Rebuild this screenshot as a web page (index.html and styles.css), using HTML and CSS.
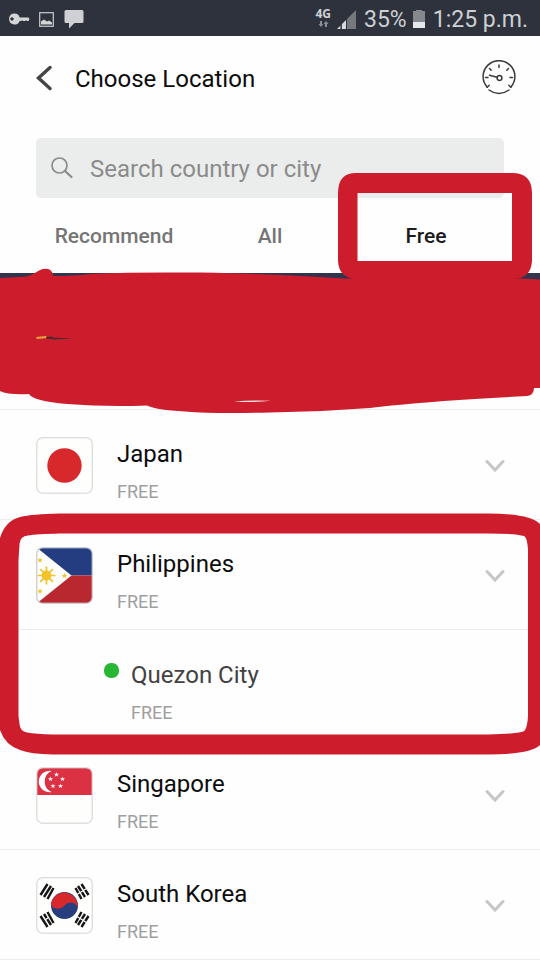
FILE: index.html
```html
<!DOCTYPE html>
<html lang="en">
<head>
<meta charset="utf-8">
<meta name="viewport" content="width=device-width, initial-scale=1">
<title>Choose Location</title>
<link rel="stylesheet" href="styles.css">
</head>
<body>
<div class="page">
  <div class="status">
    <div class="status-group">
      <svg width="22" height="14" viewBox="0 0 22 14"><path fill="#d3d5d7" fill-rule="evenodd" d="M6.500 1.500a5.500 5.500 0 0 1 5.200 4H20.500l1 1.500-1 2H19l-1-.8-1 .8h-2l-1-.8-1 .8h-1.300A5.500 5.500 0 1 1 6.500 1.500zM4 5.200a1.700 1.700 0 1 0 .01 0z"/></svg>
      <svg class="status-picture" width="15" height="15" viewBox="0 0 15 15"><rect x=".7" y=".7" width="13.600" height="13.600" fill="none" stroke="#c9cbce" stroke-width="1.200"/><path fill="#d3d5d7" d="M2 12.500V9.500l3-2 3 2 2-1 3 2v2z"/></svg>
      <svg width="20" height="20" viewBox="0 0 20 20"><path fill="#cfd0d3" d="M2 1h16q1.500 0 1.500 1.500v10q0 1.500-1.500 1.500h-7.500L5 19.500V14H2q-1.500 0-1.500-1.500v-10Q.500 1 2 1z"/></svg>
    </div>
    <div class="status-group">
      <span class="network">
        <span class="network-name">4G</span>
        <svg width="11" height="6" viewBox="0 0 11 6"><path fill="#8b8e93" d="M2 0h2v3h1.500L3 6 .500 3H2zM7 6h2V3h1.500L8 0 5.500 3H7z"/></svg>
      </span>
      <svg class="signal" width="19" height="19" viewBox="0 0 19 19"><path fill="#75787d" d="M10 9l9-9v19h-9z"/><path fill="#d8dadd" d="M0 19l3.500-3.500V19zM4.500 14.500L9 10v9H4.500z"/><path stroke="#2e323c" d="M4.200 10v9M9.500 5v14"/></svg>
      <span class="status-text">35%</span>
      <svg class="battery" width="12" height="19" viewBox="0 0 12 19"><path fill="#85888c" d="M0 1h3V0h6v1h3v11H0z"/><path fill="#e6e8ea" d="M0 12h12v6H0z"/></svg>
      <span class="status-text">1:25 p.m.</span>
    </div>
  </div>

  <header class="header">
    <button class="icon-button" type="button" aria-label="Back">
      <svg width="16" height="26" viewBox="0 0 16 26"><path d="M14 2.500L2.500 13 14 23.500" fill="none" stroke="#454545" stroke-width="3.400" stroke-linecap="round" stroke-linejoin="miter"/></svg>
    </button>
    <h1 class="title">Choose Location</h1>
    <button class="icon-button" type="button" aria-label="Speed test">
      <svg width="36" height="36" viewBox="0 0 36 36" fill="none" stroke="#3b3b3b" stroke-width="1.500" stroke-linecap="round"><path d="M6.200 27.200A15.900 15.900 0 1 1 29.800 27.200M8 30q10 7 20 0"/><circle cx="18.500" cy="18" r="2.400"/><path d="M16 17.300L8.500 15.300M18 5v2.500M8.500 8.500l1.600 1.600M27.500 8.500l-1.600 1.600M4.500 17.500H7M29 17.500h2.500M6.200 27.200l2-2M29.800 27.200l-2-2"/></svg>
    </button>
  </header>

  <label class="search">
    <svg width="22" height="22" viewBox="0 0 22 22" fill="none" stroke="#8a8a8a" stroke-width="1.700" stroke-linecap="round"><circle cx="8.500" cy="8.500" r="7.500"/><path d="M14 14l6.500 6" stroke-width="2.200"/></svg>
    <input class="search-input" type="text" aria-label="Search country or city" placeholder="Search country or city">
  </label>

  <nav class="tabs">
    <button class="tab" type="button">Recommend</button>
    <button class="tab" type="button">All</button>
    <div class="tab-marked">
      <button class="tab tab-active" type="button">Free</button>
      <svg class="tab-marker" width="194" height="106" viewBox="0 0 194 106"><path fill="#cd1d2c" fill-rule="evenodd" d="M18 0H174Q194 0 194 20V88Q193 105 176 106H18Q1 105 0 88V20Q0 0 18 0zM19.500 20V88H174V20z"/></svg>
    </div>
  </nav>

  <div class="covered">
    <svg class="scribble" width="540" height="150" viewBox="0 265 540 150" preserveAspectRatio="none">
      <path fill="#cd1d2c" d="M0 278L20 277Q28 277 33 274L40 270Q50 266 53 274V276Q75 276 90 274Q112 272 200 272.500Q270 274 300 276L345 278.500H522L540 279.500V388H534Q534 395 527 396L475 399Q410 403 370 408Q320 412 270 412.500Q215 414 185 411.500Q156 410 147 405.500Q105 407 67 404Q33 401 29 394Q8 395 0 391z"/>
      <path fill="#e8a33a" d="M36 337l10-1 2 2-11 1z"/>
      <path fill="#4a2b2c" d="M46 337l6-.500 1 1 20 1-18 1-9-1z"/>
      <path fill="#f6dfe1" d="M234 401.500q18-1.500 37-.800-18 2.300-37 .8z"/>
    </svg>
  </div>

  <main class="list">
    <button class="row" type="button">
      <svg class="flag" width="57" height="57" viewBox="0 0 57 57"><rect x=".75" y=".75" width="55.500" height="55.500" rx="6" fill="#fefefd" stroke="#dfe1e1" stroke-width="1.500"/><circle cx="28.500" cy="28.500" r="17.200" fill="#d7282b"/></svg>
      <span class="place"><span class="name">Japan</span><span class="plan">FREE</span></span>
      <svg class="chevron" width="20" height="14" viewBox="0 0 20 14"><path d="M2 2.500l8 8.500 8-8.500"/></svg>
    </button>

    <section class="group">
      <button class="row" type="button">
        <svg class="flag" width="57" height="57" viewBox="0 0 57 57">
          <defs><clipPath id="ph"><rect x=".75" y=".75" width="55.500" height="55.500" rx="6"/></clipPath></defs>
          <g clip-path="url(#ph)"><path fill="#233d80" d="M0 0h57v28.500H0z"/><path fill="#b9282f" d="M0 28.500h57V57H0z"/><path fill="#fefefc" d="M0 0l35.500 28.500L0 57z"/></g>
          <g fill="#f2c22b" stroke="#f2c22b"><circle cx="10.500" cy="28.500" r="4.500"/><path stroke-width="1.700" d="M10.500 19.500v18M1.500 28.500h18M4.200 22.200l12.600 12.600M16.800 22.200L4.200 34.800"/></g>
          <path fill="#f2c22b" d="M28.500 26l.8 1.700 1.800.2-1.300 1.300.3 1.800-1.600-.9-1.600.9.300-1.800-1.300-1.300 1.800-.2zM4 10.500l.8 1.700 1.800.2-1.300 1.300.3 1.800-1.600-.9-1.600.9.300-1.800L1.400 12.400l1.800-.2zM4 41.500l.8 1.700 1.800.2-1.300 1.300.3 1.800-1.600-.9-1.600.9.300-1.800-1.300-1.300 1.800-.2z"/>
          <rect x=".75" y=".75" width="55.500" height="55.500" rx="6" fill="none" stroke="#c9cbd0" stroke-opacity=".75" stroke-width="1.500"/>
        </svg>
        <span class="place"><span class="name">Philippines</span><span class="plan">FREE</span></span>
        <svg class="chevron" width="20" height="14" viewBox="0 0 20 14"><path d="M2 2.500l8 8.500 8-8.500"/></svg>
      </button>
      <button class="row city" type="button">
        <span class="online"></span>
        <span class="place"><span class="name">Quezon City</span><span class="plan">FREE</span></span>
      </button>
      <svg class="group-marker" width="540" height="242" viewBox="0 513 540 242" preserveAspectRatio="none"><path fill="#cd1d2c" fill-rule="evenodd" d="M0 538Q5 521 20 517Q32 514 60 513.500H488Q530 513.500 540 524V745Q530 754.500 488 754.500H53Q30 754 20 750Q5 745 0 730zM60 533.500Q36 534 28 535.500Q20 536 19.500 544L18.500 560V716L19.500 724Q20 731 27 732.500Q36 734 53 734.500H488Q515 734 523 731.500Q527 731 528 716V549Q527 537 524 536Q515 533.500 488 533.500z"/></svg>
    </section>

    <button class="row" type="button">
      <svg class="flag" width="57" height="57" viewBox="0 0 57 57">
        <rect x=".75" y=".75" width="55.500" height="55.500" rx="6" fill="#fefefd"/>
        <path fill="#dc3043" d="M1 28V7q0-6 6-6h43q6 0 6 6v21z"/>
        <path fill="#fff" d="M15.500 4A10.700 10.700 0 1 0 15.500 25A11.500 11.500 0 0 1 15.500 4z"/>
        <path fill="#fff" d="M20.500 5l.6 1.700h1.900l-1.500 1.200.6 1.900-1.600-1.200-1.600 1.200.6-1.900L18 6.700h1.900zM14.500 9.500l.6 1.700H17l-1.500 1.200.6 1.900-1.600-1.200-1.600 1.200.6-1.900-1.500-1.200h1.900zM26.500 9.500l.6 1.700H29l-1.500 1.200.6 1.900-1.600-1.200-1.600 1.200.6-1.900-1.500-1.200h1.900zM17 16.500l.6 1.700h1.900L18 19.400l.6 1.900-1.600-1.200-1.600 1.200.6-1.900-1.500-1.200h1.900zM24.500 16.500l.6 1.700H27l-1.500 1.200.6 1.900-1.600-1.200-1.600 1.200.6-1.900-1.500-1.200h1.900z"/>
        <rect x=".75" y=".75" width="55.500" height="55.500" rx="6" fill="none" stroke="#d5d6d8" stroke-opacity=".75" stroke-width="1.500"/>
      </svg>
      <span class="place"><span class="name">Singapore</span><span class="plan">FREE</span></span>
      <svg class="chevron" width="20" height="14" viewBox="0 0 20 14"><path d="M2 2.500l8 8.500 8-8.500"/></svg>
    </button>

    <button class="row" type="button">
      <svg class="flag" width="57" height="57" viewBox="0 0 57 57">
        <rect x=".75" y=".75" width="55.500" height="55.500" rx="6" fill="#fefefd" stroke="#dfe1e1" stroke-width="1.500"/>
        <circle cx="28.500" cy="28.500" r="13.500" fill="#263e7e"/>
        <path fill="#d7282b" d="M16.800 21.700A13.500 13.500 0 0 1 41.500 31C40 24.500 32.500 24 28.500 28.500C24.500 33.500 15.500 32.500 15.200 26.500Q15.500 24 16.800 21.700z"/>
        <g stroke="#161616" stroke-width="2.400">
          <path d="M4.500 18l7-11M8 20l7-11M11.500 22l6-11"/>
          <path d="M52.500 18l-7-11M49 20l-7-11M45.500 22l-6-11"/>
          <path d="M4.500 39l7 11M8 37l7 11M11.500 35l6 11"/>
          <path d="M52.500 39l-7 11M49 37l-7 11M45.500 35l-6 11"/>
        </g>
        <g stroke="#fefefd" stroke-width="1.200"><path d="M50.500 11.500L41 17.500M41 39.500l9.500 6M9 43l3.500-2.500"/></g>
      </svg>
      <span class="place"><span class="name">South Korea</span><span class="plan">FREE</span></span>
      <svg class="chevron" width="20" height="14" viewBox="0 0 20 14"><path d="M2 2.500l8 8.500 8-8.500"/></svg>
    </button>
  </main>
</div>
</body>
</html>
```
FILE: styles.css
```css
* {
  box-sizing: border-box;
}

body {
  margin: 0;
  background: #fefefe;
  color: #0c0c0c;
  font-family: Roboto, "Liberation Sans", sans-serif;
}

button {
  padding: 0;
  border: 0;
  background: none;
  color: inherit;
  font: inherit;
  text-align: left;
}

svg {
  display: block;
  flex: none;
}

.page {
  overflow: hidden;
}

.status {
  display: flex;
  justify-content: space-between;
  align-items: center;
  height: 36px;
  padding: 2px 12px 0 8px;
  background: #2e323c;
  color: #cdd0d4;
}

.status-group {
  display: flex;
  align-items: center;
}

.status-picture {
  margin: 0 10px 0 9px;
}

.status-text {
  padding-top: 2px;
  font-size: 23px;
  line-height: 32px;
}

.network {
  display: flex;
  flex-direction: column;
  align-items: center;
  gap: 1px;
  margin-top: -4px;
}

.network-name {
  font: bold 12px/12px "Open Sans", sans-serif;
}

.signal {
  margin: 0 8px 0 6px;
}

.battery {
  margin: 0 8px 0 6px;
}

.header {
  display: flex;
  align-items: center;
  height: 84px;
  padding: 0 23px 0 36px;
}

.title {
  flex: 1;
  margin: 2px 0 0 23px;
  font-size: 24px;
  font-weight: 400;
  line-height: 32px;
}

.search {
  display: flex;
  align-items: center;
  gap: 17px;
  height: 60px;
  margin: 18px 36px 0;
  padding: 0 15px;
  border-radius: 5px;
  background: #ebeded;
}

.search-input {
  flex: 1;
  min-width: 0;
  padding: 2px 0 0;
  border: 0;
  outline: 0;
  background: none;
  color: #333;
  font: inherit;
  font-size: 24px;
  line-height: 32px;
}

.search-input::placeholder {
  color: #8b8b8b;
  opacity: 1;
}

.tabs {
  display: grid;
  grid-template-columns: repeat(3, 1fr);
  height: 75px;
  padding: 0 36px;
}

.tab {
  width: 100%;
  height: 75px;
  color: #757575;
  font-size: 21px;
  font-weight: 500;
  line-height: 28px;
  text-align: center;
}

.tab-active {
  color: #1c1c1c;
}

.tab-marked {
  position: relative;
}

.tab-marker {
  position: absolute;
  z-index: 3;
  top: -25px;
  left: -10px;
  pointer-events: none;
}

.covered {
  position: relative;
  height: 137px;
  border-top: 27px solid #30344c;
  border-bottom: 1px solid #ececec;
}

.scribble {
  position: absolute;
  z-index: 2;
  top: -35px;
  left: 0;
  width: 100%;
  pointer-events: none;
}

.row {
  display: flex;
  align-items: center;
  width: 100%;
  height: 110px;
  padding: 2px 35px 0 36px;
  border-bottom: 1px solid #ececec;
}

.place {
  display: flex;
  flex: 1;
  flex-direction: column;
  gap: 10px;
  margin: 10px 0 0 24px;
}

.name {
  font-size: 24px;
  line-height: 32px;
}

.plan {
  color: #9f9f9f;
  font-size: 18px;
  line-height: 24px;
}

.chevron {
  fill: none;
  stroke: #c6c6c6;
  stroke-width: 3;
  stroke-linecap: round;
}

.group {
  position: relative;
}

.city {
  padding-left: 104px;
}

.city .place {
  margin: 12px 0 0 12px;
  color: #424242;
}

.online {
  width: 15px;
  height: 15px;
  margin-bottom: 30px;
  border-radius: 7px;
  background: #28b735;
}

.group-marker {
  position: absolute;
  z-index: 2;
  top: -7px;
  left: 0;
  width: 100%;
  pointer-events: none;
}
```
